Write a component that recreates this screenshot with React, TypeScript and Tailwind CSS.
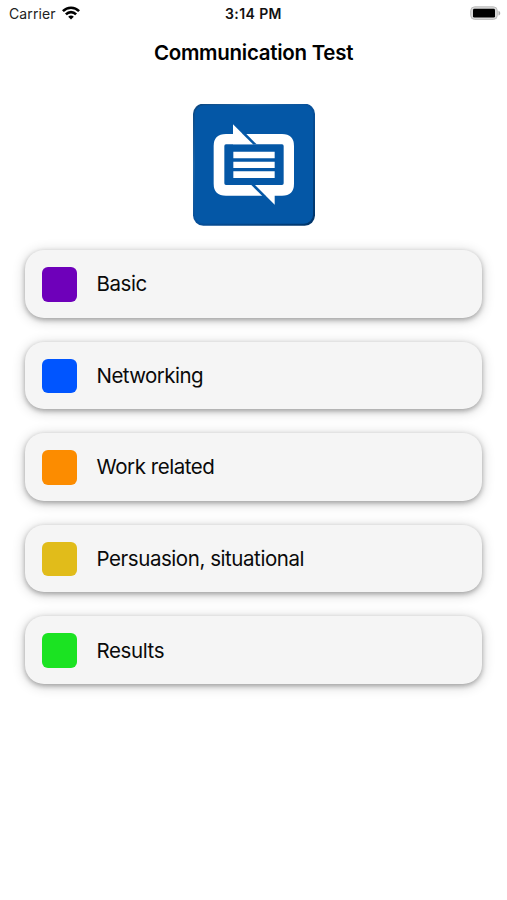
const categories = [
  { label: 'Basic', swatch: 'bg-[#6e00ba]', tracking: 'tracking-[-0.4px]' },
  { label: 'Networking', swatch: 'bg-[#0055ff]', tracking: 'tracking-[-0.55px]' },
  { label: 'Work related', swatch: 'bg-[#fc8c00]', tracking: 'tracking-[-0.45px]' },
  { label: 'Persuasion, situational', swatch: 'bg-[#e1bc1a]', tracking: 'tracking-[-0.44px]' },
  { label: 'Results', swatch: 'bg-[#1be322]', tracking: 'tracking-[-0.4px]' },
];

function WifiIcon() {
  return (
    <svg className="ml-[6px] h-[14px] w-[18px]" viewBox="0 0 18 14" fill="none" stroke="#000" strokeWidth="2.6">
      <path d="M0.9 5.2C5.4 0.6 12.6 0.6 17.1 5.2" />
      <path d="M3.9 8.3C6.8 5.4 11.2 5.4 14.1 8.3" />
      <path d="M6.2 10.7C7.8 9.1 10.2 9.1 11.8 10.7L9 13.6Z" fill="#000" stroke="none" />
    </svg>
  );
}

function BatteryIcon() {
  return (
    <svg className="h-[14px] w-[31px]" viewBox="0 0 31 14">
      <rect x="0.7" y="0.8" width="26.6" height="12.6" rx="4" fill="#d9d9d9" stroke="#bdbdbd" />
      <rect x="3" y="2.8" width="22" height="8.8" rx="1.4" fill="#000" />
      <path d="M28.5 4.7C30.8 5.4 30.8 8.8 28.5 9.5Z" fill="#aaa" />
    </svg>
  );
}

function Logo() {
  return (
    <svg className="mx-auto mt-[34px] block h-[122px] w-[122px] shrink-0" viewBox="27 27 366 366">
      <defs>
        <linearGradient id="edge" x1="0" y1="0" x2="1" y2="1">
          <stop offset="0" stopColor="#0a4680" />
          <stop offset="0.25" stopColor="#1f65a5" />
          <stop offset="0.5" stopColor="#07509a" />
          <stop offset="1" stopColor="#003468" />
        </linearGradient>
      </defs>
      <rect x="27" y="26" width="366" height="366" rx="31" fill="url(#edge)" />
      <rect x="32" y="31" width="355" height="355" rx="27" fill="#0457a6" />
      <path
        fill="#fff"
        fillRule="evenodd"
        d="M126 117H294Q330 117 330 153V266Q330 302 294 302H126Q89 302 89 266V153Q89 117 126 117ZM126 148Q121 148 121 153V265Q121 270 126 270H294Q299 270 299 265V153Q299 148 294 148Z"
      />
      <path d="M147 88L207 148H147Z" fill="#fff" />
      <path d="M181 111L218 148H207L175 116Z" fill="#0457a6" />
      <path d="M272 329L213 270H272Z" fill="#fff" />
      <path d="M202 270H213L246 303H235Z" fill="#0457a6" />
      <path d="M148 170H272V190H148ZM148 200H272V219H148ZM148 229H272V249H148Z" fill="#fff" />
    </svg>
  );
}

export default function App() {
  return (
    <main className="flex h-[900px] w-full flex-col overflow-hidden bg-white font-['Inter',sans-serif] text-black">
      <header className="grid h-[26px] grid-cols-3 items-center pl-[9px] pr-[6px]">
        <div className="flex items-center text-[14px] tracking-[0.1px] text-[#222]">
          Carrier
          <WifiIcon />
        </div>
        <div className="pr-[3px] text-center text-[14px] font-semibold tracking-[0.4px] text-[#111]">3:14 PM</div>
        <div className="flex justify-end"><BatteryIcon /></div>
      </header>
      <h1 className="mt-[11px] h-[33px] text-center text-[20.5px] leading-[31px] font-semibold tracking-[-0.28px] text-black">
        Communication Test
      </h1>
      <Logo />
      <nav className="mt-[24px] flex flex-col gap-[24px] pr-[25px] pl-[25px]">
        {categories.map(({ label, swatch, tracking }) => (
          <button
            key={label}
            className="flex h-[67.6px] w-full items-center rounded-[19px] bg-[#f5f5f5] pt-px pl-[17px] text-left shadow-[0_2px_5px_rgba(0,0,0,0.28),0_2px_13px_rgba(0,0,0,0.2)]"
          >
            <span className={`h-[34.5px] w-[34.5px] rounded-[6px] ${swatch}`} />
            <span className={`ml-[20px] text-[20.5px] leading-[28px] text-[#0a0a0a] ${tracking}`}>{label}</span>
          </button>
        ))}
      </nav>
    </main>
  );
}
